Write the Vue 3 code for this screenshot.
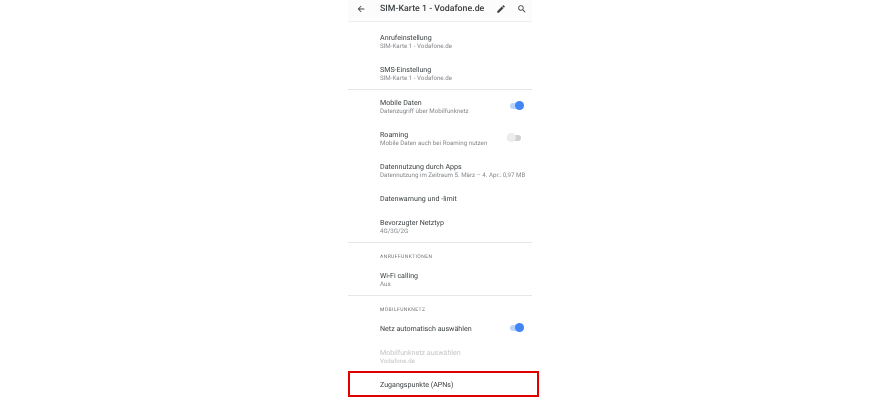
<script setup>
const groups = [
  {
    rows: [
      { title: 'Anrufeinstellung', sub: 'SIM-Karte 1 - Vodafone.de' },
      { title: 'SMS-Einstellung', sub: 'SIM-Karte 1 - Vodafone.de' }
    ]
  },
  {
    rows: [
      { title: 'Mobile Daten', sub: 'Datenzugriff über Mobilfunknetz', toggle: 'on' },
      { title: 'Roaming', sub: 'Mobile Daten auch bei Roaming nutzen', toggle: 'off' },
      { title: 'Datennutzung durch Apps', sub: 'Datennutzung im Zeitraum 5. März – 4. Apr.: 0,97 MB' },
      { title: 'Datenwarnung und -limit' },
      { title: 'Bevorzugter Netztyp', sub: '4G/3G/2G' }
    ]
  },
  {
    label: 'ANRUFFUNKTIONEN',
    rows: [{ title: 'Wi-Fi calling', sub: 'Aus' }]
  },
  {
    label: 'MOBILFUNKNETZ',
    rows: [
      { title: 'Netz automatisch auswählen', toggle: 'on' },
      { title: 'Mobilfunknetz auswählen', sub: 'Vodafone.de', disabled: true },
      { title: 'Zugangspunkte (APNs)' }
    ]
  }
];
</script>

<template>
  <div class="page">
    <div class="screen">
      <header class="appbar">
        <svg class="icon back" viewBox="0 0 24 24"><path d="M20 11H7.83l5.59-5.59L12 4l-8 8 8 8 1.41-1.41L7.83 13H20v-2z" /></svg>
        <h1 class="appbar-title">SIM-Karte 1 - Vodafone.de</h1>
        <svg class="icon edit" viewBox="0 0 24 24"><path d="M3 17.25V21h3.75L17.81 9.94l-3.75-3.75L3 17.25zM20.71 7.04a1 1 0 0 0 0-1.41l-2.34-2.34a1 1 0 0 0-1.41 0l-1.83 1.83 3.75 3.75 1.83-1.83z" /></svg>
        <svg class="icon search" viewBox="0 0 24 24"><path d="M15.5 14h-.79l-.28-.27A6.47 6.47 0 0 0 16 9.5 6.5 6.5 0 1 0 9.5 16c1.61 0 3.09-.59 4.23-1.57l.27.28v.79l5 4.99L20.49 19l-4.99-5zm-6 0C7.01 14 5 11.99 5 9.5S7.01 5 9.5 5 14 7.01 14 9.5 11.99 14 9.5 14z" /></svg>
      </header>

      <section v-for="(group, i) in groups" :key="i" class="group">
        <div v-if="group.label" class="group-label">{{ group.label }}</div>
        <div
          v-for="row in group.rows"
          :key="row.title"
          class="row"
          :class="{ disabled: row.disabled }"
        >
          <div class="row-text">
            <div class="row-title">{{ row.title }}</div>
            <div v-if="row.sub" class="row-sub">{{ row.sub }}</div>
          </div>
          <div v-if="row.toggle" class="toggle" :class="row.toggle">
            <span class="toggle-thumb"></span>
          </div>
        </div>
      </section>

      <div class="highlight"></div>
    </div>
  </div>
</template>

<style scoped>
.page {
  width: 879px;
  height: 400px;
  overflow: hidden;
  background: #fff;
  padding-left: 348px;
  box-sizing: border-box;
  font-family: Roboto, "Liberation Sans", sans-serif;
  text-rendering: geometricPrecision;
}

.screen {
  position: relative;
  width: 184px;
  will-change: transform;
}

.appbar {
  height: 18px;
  padding-bottom: 3px;
  display: flex;
  align-items: center;
  background: #fcfcfc;
  border-bottom: 1px solid #eeeeee;
}

.icon {
  fill: #3c4043;
  flex: none;
}

.back {
  width: 10px;
  height: 10px;
  margin-left: 8px;
}

.appbar-title {
  margin: 0 0 0 14px;
  flex: 1;
  font-size: 8.8px;
  font-weight: 500;
  color: #3c4043;
  white-space: nowrap;
}

.edit {
  width: 10px;
  height: 10px;
  margin-right: 11px;
}

.search {
  width: 10px;
  height: 10px;
  margin-right: 5px;
}

.group {
  border-bottom: 1px solid #e6e6e6;
}

.group:first-of-type {
  padding-top: 3px;
}

.group:last-of-type {
  border-bottom: none;
}

.group-label {
  height: 7px;
  padding: 11px 0 2px 32px;
  font-size: 5px;
  letter-spacing: 0.4px;
  line-height: 7px;
  color: #6f7276;
}

.row {
  display: flex;
  align-items: center;
  padding: 8px 8px 6px 32px;
}

.row-text {
  flex: 1;
  min-width: 0;
}

.row-title {
  font-size: 7.1px;
  line-height: 10px;
  color: #3c4043;
  white-space: nowrap;
}

.row-sub {
  font-size: 6.2px;
  line-height: 6px;
  margin-bottom: 2px;
  color: #85888c;
  white-space: nowrap;
}

.disabled .row-title,
.disabled .row-sub {
  color: #c4c5c7;
}

.toggle {
  position: relative;
  flex: none;
  width: 14px;
  height: 6px;
  margin-top: -3px;
  border-radius: 3px;
}

.toggle.on {
  background: #bcd3fb;
}

.toggle.off {
  margin-right: 3px;
  background: #d0d0d0;
}

.toggle-thumb {
  position: absolute;
  top: -1.5px;
  width: 9px;
  height: 9px;
  border-radius: 50%;
}

.toggle.on .toggle-thumb {
  right: 0;
  background: #4285f4;
}

.toggle.off .toggle-thumb {
  left: 0;
  background: #ececec;
}

.highlight {
  position: absolute;
  left: 0;
  top: 371px;
  width: 191px;
  height: 26px;
  box-sizing: border-box;
  border: 2px solid #e00000;
}
</style>
